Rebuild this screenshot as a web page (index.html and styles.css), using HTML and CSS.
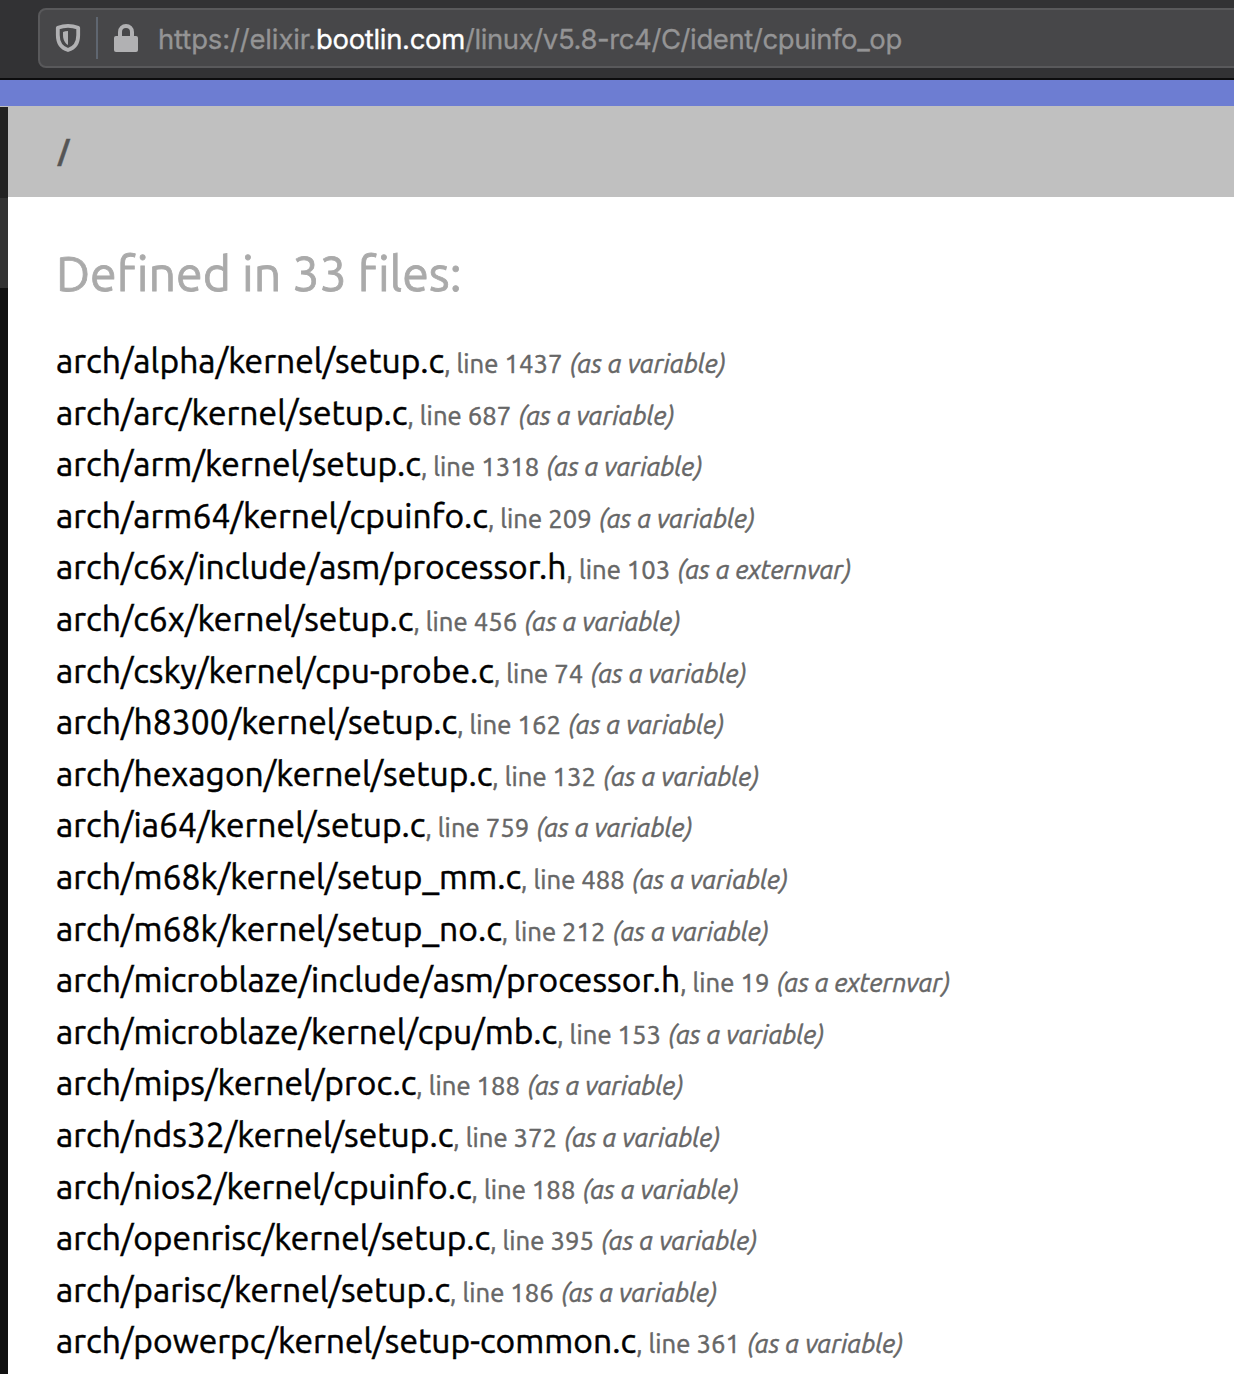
FILE: index.html
```html
<!DOCTYPE html>
<html lang="en">
<head>
<meta charset="utf-8">
<title>cpuinfo_op identifier - Linux source code</title>
<link rel="stylesheet" href="styles.css">
</head>
<body>
<header class="toolbar">
  <div class="urlbar">
    <svg class="shield" viewBox="0 0 26 30" aria-hidden="true"><path d="M13 2.9Q18 2.9 23.200 4.700V12C23.200 20 19.500 25 13 27C6.500 25 2.800 20 2.800 12V4.700Q8 2.900 13 2.900Z" fill="none" stroke="#b1b1b3" stroke-width="3.800" stroke-linejoin="round"/><path d="M13 8V22C9.500 20 8 16 8 12V9Q10 8 13 8Z" fill="#b1b1b3"/></svg>
    <span class="divider"></span>
    <svg class="lock" viewBox="0 0 24 28" aria-hidden="true"><rect y="12" width="24" height="16" rx="2" fill="#b1b1b3"/><path d="M6 13V8a6 6 0 0 1 12 0V13" fill="none" stroke="#b1b1b3" stroke-width="4"/></svg>
    <div class="url"><span class="scheme">https://elixir.</span><span class="host">bootlin.com</span><span class="path">/linux/v5.8-rc4/C/ident/cpuinfo_op</span></div>
  </div>
</header>
<div class="accent"></div>
<div class="page">
  <aside class="rail"><div class="rail-top"></div><div class="rail-mid"></div></aside>
  <main class="content">
    <nav class="crumbs">/</nav>
    <h1>Defined in 33 files:</h1>
    <ul class="results">
      <li><a>arch/alpha/kernel/setup.c</a><span>, line 1437 </span><em>(as a variable)</em></li>
      <li><a>arch/arc/kernel/setup.c</a><span>, line 687 </span><em>(as a variable)</em></li>
      <li><a>arch/arm/kernel/setup.c</a><span>, line 1318 </span><em>(as a variable)</em></li>
      <li><a>arch/arm64/kernel/cpuinfo.c</a><span>, line 209 </span><em>(as a variable)</em></li>
      <li><a>arch/c6x/include/asm/processor.h</a><span>, line 103 </span><em>(as a externvar)</em></li>
      <li><a>arch/c6x/kernel/setup.c</a><span>, line 456 </span><em>(as a variable)</em></li>
      <li><a>arch/csky/kernel/cpu-probe.c</a><span>, line 74 </span><em>(as a variable)</em></li>
      <li><a>arch/h8300/kernel/setup.c</a><span>, line 162 </span><em>(as a variable)</em></li>
      <li><a>arch/hexagon/kernel/setup.c</a><span>, line 132 </span><em>(as a variable)</em></li>
      <li><a>arch/ia64/kernel/setup.c</a><span>, line 759 </span><em>(as a variable)</em></li>
      <li><a>arch/m68k/kernel/setup_mm.c</a><span>, line 488 </span><em>(as a variable)</em></li>
      <li><a>arch/m68k/kernel/setup_no.c</a><span>, line 212 </span><em>(as a variable)</em></li>
      <li><a>arch/microblaze/include/asm/processor.h</a><span>, line 19 </span><em>(as a externvar)</em></li>
      <li><a>arch/microblaze/kernel/cpu/mb.c</a><span>, line 153 </span><em>(as a variable)</em></li>
      <li><a>arch/mips/kernel/proc.c</a><span>, line 188 </span><em>(as a variable)</em></li>
      <li><a>arch/nds32/kernel/setup.c</a><span>, line 372 </span><em>(as a variable)</em></li>
      <li><a>arch/nios2/kernel/cpuinfo.c</a><span>, line 188 </span><em>(as a variable)</em></li>
      <li><a>arch/openrisc/kernel/setup.c</a><span>, line 395 </span><em>(as a variable)</em></li>
      <li><a>arch/parisc/kernel/setup.c</a><span>, line 186 </span><em>(as a variable)</em></li>
      <li><a>arch/powerpc/kernel/setup-common.c</a><span>, line 361 </span><em>(as a variable)</em></li>
    </ul>
  </main>
</div>
</body>
</html>
```
FILE: styles.css
```css
body {
  margin: 0;
  height: 1374px;
  overflow: hidden;
  display: flex;
  flex-direction: column;
  background: #fff;
  font-family: Ubuntu, "Noto Sans", sans-serif;
}
.toolbar {
  box-sizing: border-box;
  flex: none;
  height: 80px;
  padding: 8px 0 0 38px;
  background: #323234;
  border-bottom: 2px solid #0c0c0d;
  overflow: hidden;
}
.urlbar {
  box-sizing: border-box;
  display: flex;
  align-items: center;
  width: 1220px;
  height: 60px;
  padding-left: 15px;
  background: #474749;
  border: 2px solid #59595b;
  border-radius: 8px;
}
.shield { width: 26px; height: 30px; flex: none; }
.divider { width: 2px; height: 42px; margin: 0 16px 0 15px; background: #5f6670; }
.lock { width: 24px; height: 28px; flex: none; }
.url {
  margin-left: 20px;
  padding-top: 2px;
  white-space: nowrap;
  color: #949495;
  font: 27.500px/40px Inter, sans-serif;
  -webkit-text-stroke: 0.3px;
}
.scheme { letter-spacing: -0.150px; }
.host { color: #fff; letter-spacing: -0.330px; }
.path { letter-spacing: -0.400px; }
.accent { flex: none; height: 26px; background: #6d7dd2; }
.page { display: flex; flex: 1; min-height: 0; }
.rail { width: 8px; flex: none; background: #111; border-top: 1px solid #c0c0c0; }
.rail-top { height: 91px; background: #222; }
.rail-mid { height: 90px; background: #333; }
.content { flex: 1; min-width: 0; }
.crumbs {
  height: 91px;
  padding-left: 50px;
  background: #c0c0c0;
  color: #555;
  font-size: 27.200px;
  font-weight: 700;
  line-height: 90px;
  -webkit-text-stroke: 0.5px;
}
h1 {
  margin: 0 0 0 48px;
  padding-top: 44px;
  color: #aaa;
  font-size: 48.300px;
  font-weight: 400;
  line-height: 64px;
  letter-spacing: -0.030px;
  white-space: nowrap;
  -webkit-text-stroke: 0.8px;
}
.results { margin: 30px 0 0 48px; padding: 0; list-style: none; }
.results li {
  height: 51.600px;
  line-height: 51.600px;
  white-space: nowrap;
  color: #666;
  font-size: 25.600px;
  -webkit-text-stroke: 0.5px;
}
.results a { color: #000; font-size: 33.600px; letter-spacing: 0.060px; text-decoration: none; }
.results span { white-space: pre; letter-spacing: 0.080px; margin-right: 1.300px; }
```
